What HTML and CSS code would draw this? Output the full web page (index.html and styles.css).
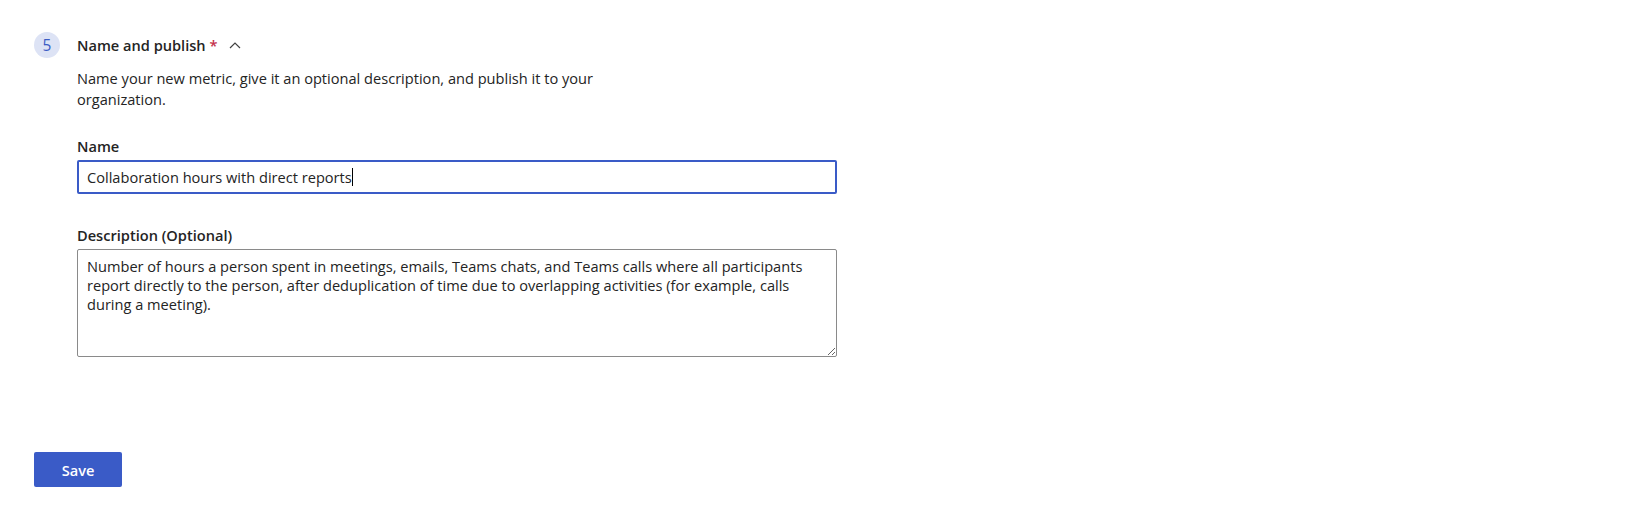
FILE: index.html
```html
<!DOCTYPE html>
<html lang="en">
<head>
<meta charset="utf-8">
<title>Name and publish</title>
<link rel="stylesheet" href="styles.css">
</head>
<body>
<main class="page">
  <section class="step">
    <div class="step-head">
      <span class="step-num">5</span>
      <h2 class="step-title">Name and publish <span class="req">*</span></h2>
      <svg class="chev" width="12" height="8" viewBox="0 0 12 8" aria-hidden="true"><path d="M1 7 L6 2 L11 7" fill="none" stroke="#424242" stroke-width="1.2"/></svg>
    </div>
    <div class="step-body">
      <p class="intro">Name your new metric, give it an optional description, and publish it to your organization.</p>
      <div class="field">
        <label class="label">Name</label>
        <div class="input focused"><span>Collaboration hours with direct reports</span><span class="caret"></span></div>
      </div>
      <div class="field field-desc">
        <label class="label" for="desc">Description (Optional)</label>
        <textarea id="desc" class="textarea">Number of hours a person spent in meetings, emails, Teams chats, and Teams calls where all participants report directly to the person, after deduplication of time due to overlapping activities (for example, calls during a meeting).</textarea>
      </div>
    </div>
  </section>
  <div class="actions">
    <button class="btn-primary">Save</button>
  </div>
</main>
</body>
</html>
```
FILE: styles.css
```css
* { box-sizing: border-box; }
html, body { margin: 0; padding: 0; background: #ffffff; }
body {
  font-family: "Open Sans", "Noto Sans", "Liberation Sans", sans-serif;
  font-size: 14.6px;
  color: #242424;
}
.page {
  padding: 32px 0 0 34px;
  width: 1631px;
  height: 515px;
  display: flex;
  flex-direction: column;
}
.step-head {
  display: flex;
  align-items: center;
  height: 26px;
}
.step-num {
  width: 26px;
  height: 26px;
  border-radius: 50%;
  background: #dde3f5;
  color: #3b5cc4;
  font-size: 15.5px;
  display: flex;
  align-items: center;
  justify-content: center;
  margin-right: 17px;
}
.step-title {
  margin: 0;
  font-size: 14.6px;
  font-weight: 600;
  color: #242424;
}
.req { color: #c4314b; }
.chev { margin-left: 12px; }
.step-body {
  padding-left: 43px;
  padding-top: 10px;
}
.intro {
  margin: 0;
  width: 560px;
  line-height: 21px;
  color: #242424;
}
.field { margin-top: 26px; width: 760px; }
.field-desc { margin-top: 31px; }
.label {
  display: block;
  font-weight: 600;
  line-height: 20px;
  margin-bottom: 4px;
}
.input {
  height: 34px;
  border: 2px solid #3a5bc7;
  border-radius: 2px;
  padding: 0 8px;
  display: flex;
  align-items: center;
}
.caret {
  display: inline-block;
  width: 1px;
  height: 18px;
  background: #000;
}
.textarea {
  display: block;
  width: 760px;
  height: 108px;
  border: 1px solid #8a8a8a;
  border-radius: 2px;
  padding: 7px 9px;
  font-family: inherit;
  font-size: 14.6px;
  line-height: 19px;
  color: #242424;
  resize: both;
}
.actions {
  margin-top: auto;
  margin-bottom: 28px;
}
.btn-primary {
  width: 88px;
  height: 35px;
  background: #3a5bc7;
  border: none;
  border-radius: 2px;
  color: #fff;
  font-family: inherit;
  font-size: 14.6px;
  font-weight: 600;
}
```
